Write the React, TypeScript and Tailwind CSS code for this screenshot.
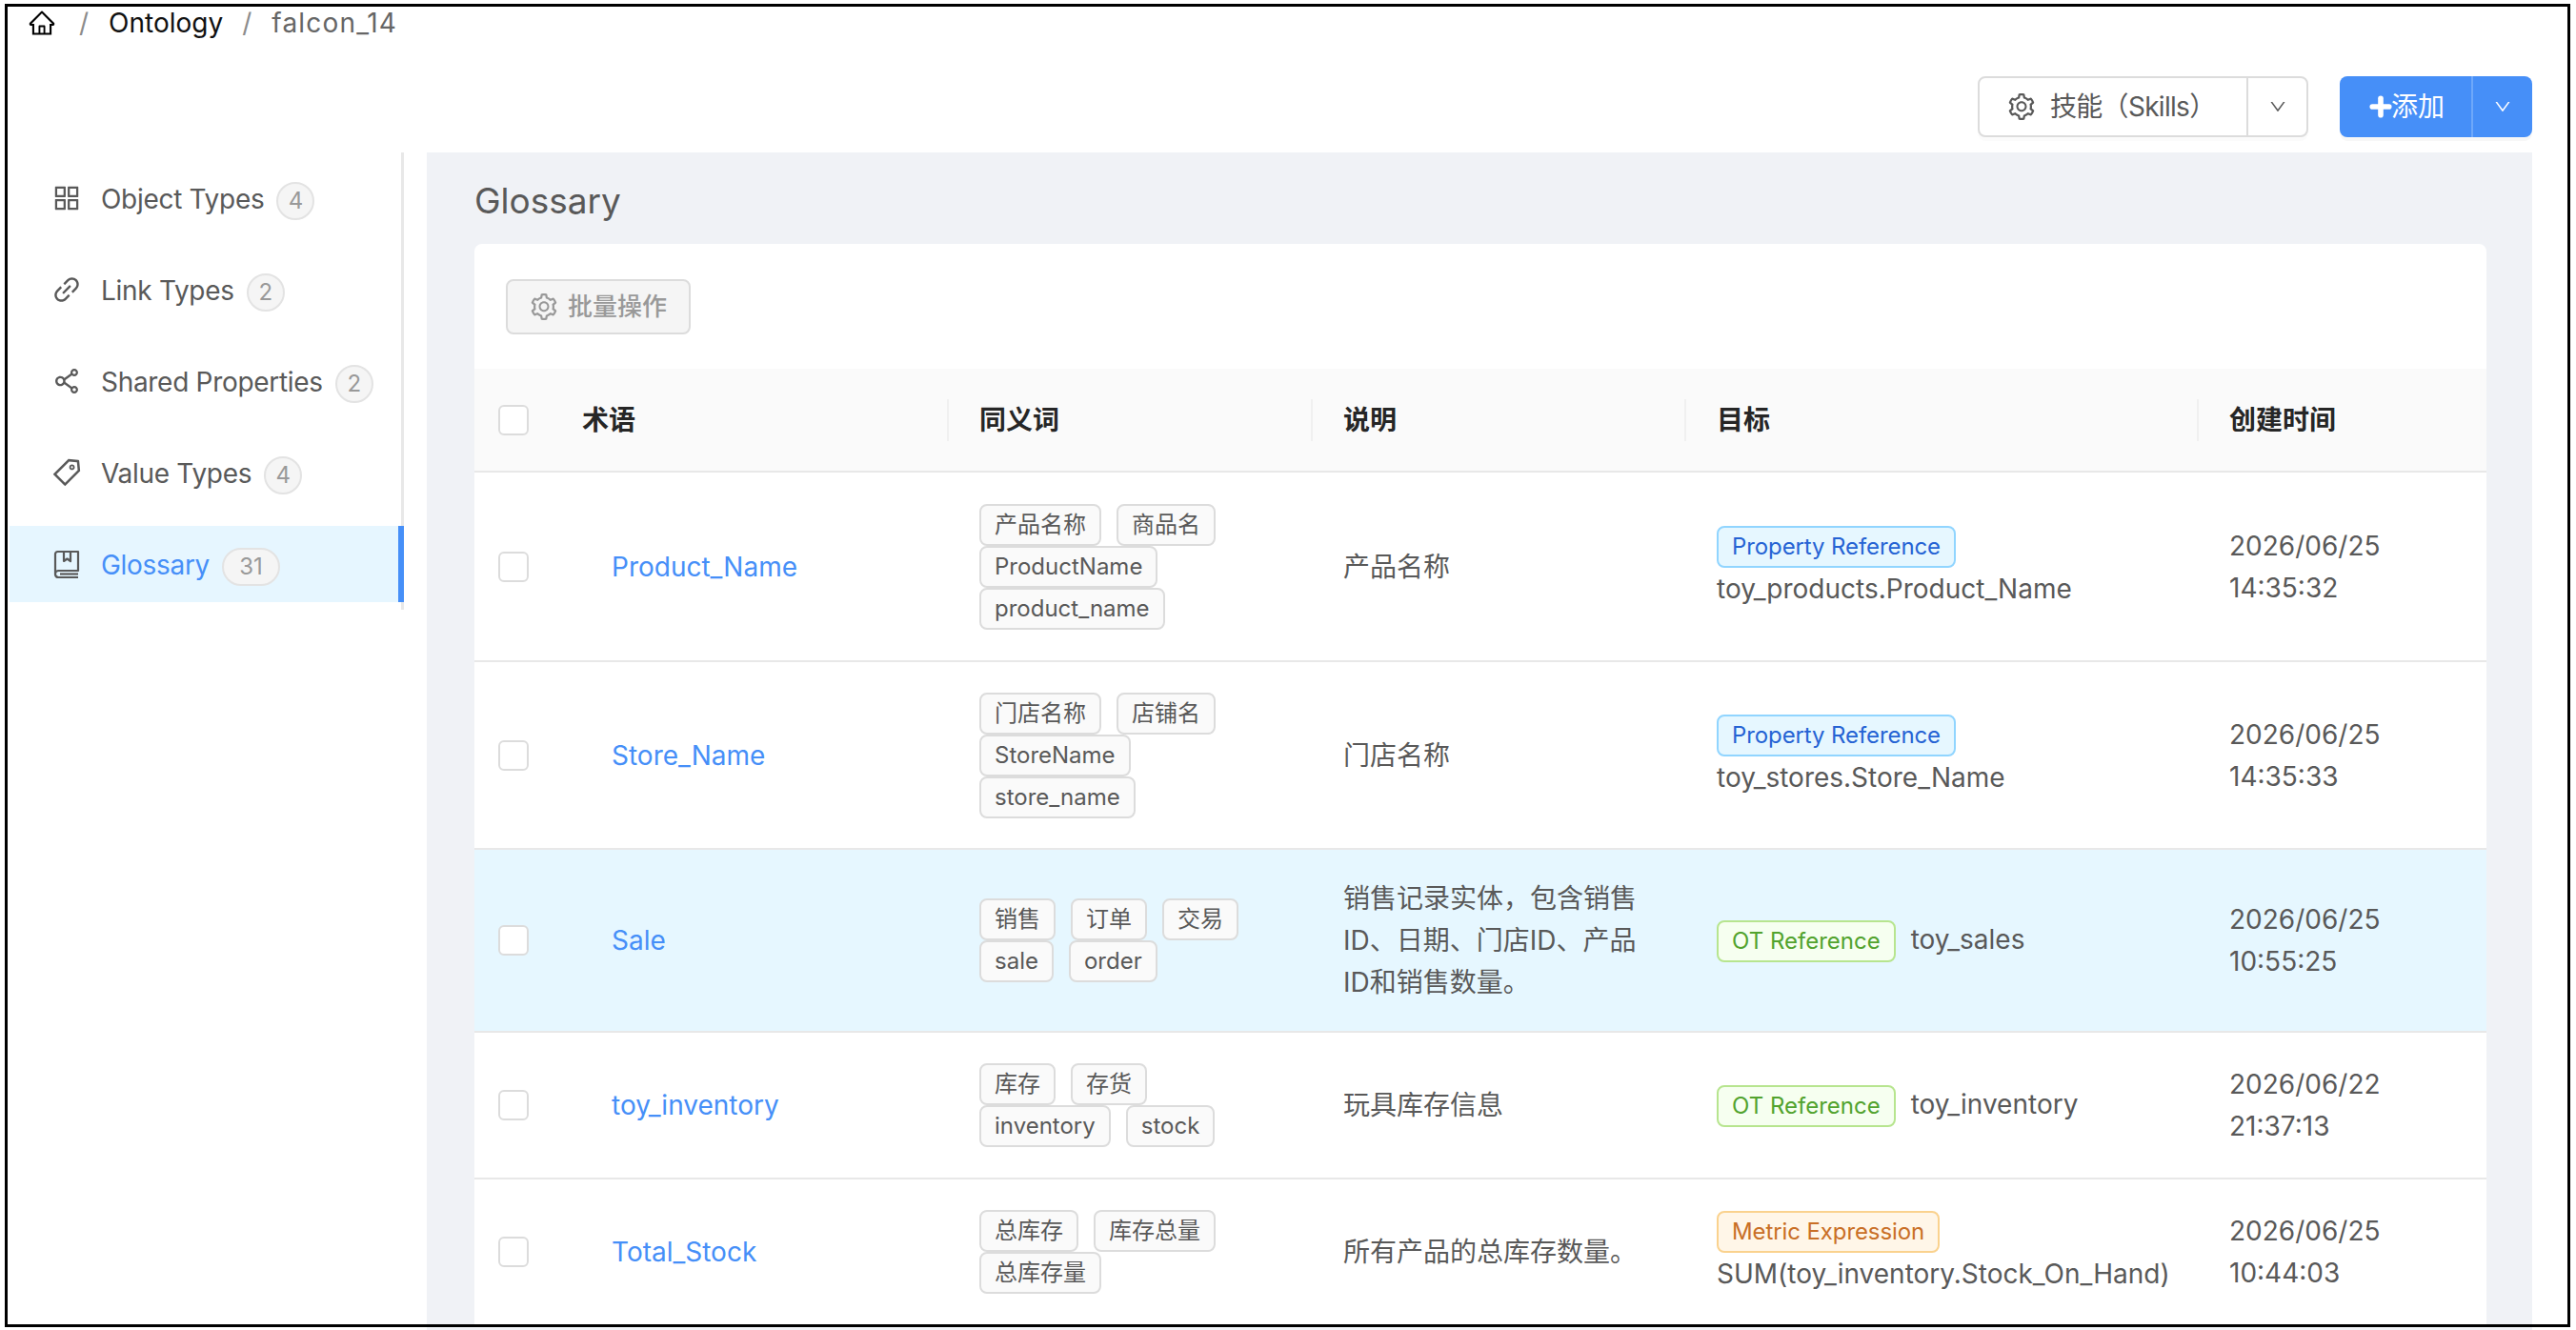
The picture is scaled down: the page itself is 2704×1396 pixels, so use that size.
import React from "react";
import {
  AiOutlineAppstore,
  AiOutlineLink,
  AiOutlineShareAlt,
  AiOutlineTag,
  AiOutlineHome,
  AiOutlineSetting,
  AiOutlineDown,
} from "react-icons/ai";
import { Plus } from "lucide-react";

const font = "font-['Inter','Noto_Sans_CJK_SC',sans-serif]";

function Tag({ children }: { children: React.ReactNode }) {
  return (
    <span className="mr-4 inline-flex h-11 items-center whitespace-nowrap rounded-lg border-2 border-[#dcdcdc] bg-[#fafafa] px-3.5 text-2xl text-[#595959]">
      {children}
    </span>
  );
}

function TypeTag({ kind, children }: { kind: "prop" | "ot" | "metric"; children: React.ReactNode }) {
  const tone =
    kind === "prop"
      ? "border-[#91d5ff] bg-[#e6f7ff] text-[#2563d4] tracking-[-0.1px]"
      : kind === "ot"
        ? "border-[#b7e58f] bg-[#f6fff0] text-[#52a32e]"
        : "border-[#fad28e] bg-[#fff6e8] text-[#c96f26] tracking-[-0.1px]";
  return (
    <span className={`mr-4 inline-flex h-11 items-center whitespace-nowrap rounded-lg border-2 px-3.5 align-middle text-2xl ${tone}`}>
      {children}
    </span>
  );
}

type Row = {
  term: string;
  tags: string[];
  desc: string;
  kind: "prop" | "ot" | "metric";
  label: string;
  target: string;
  block: boolean;
  time: string;
  height: string;
  active?: boolean;
};

const rows: Row[] = [
  {
    term: "Product_Name",
    tags: ["产品名称", "商品名", "ProductName", "product_name"],
    desc: "产品名称",
    kind: "prop",
    label: "Property Reference",
    target: "toy_products.Product_Name",
    block: true,
    time: "2026/06/25 14:35:32",
    height: "h-[199px]",
  },
  {
    term: "Store_Name",
    tags: ["门店名称", "店铺名", "StoreName", "store_name"],
    desc: "门店名称",
    kind: "prop",
    label: "Property Reference",
    target: "toy_stores.Store_Name",
    block: true,
    time: "2026/06/25 14:35:33",
    height: "h-[197px]",
  },
  {
    term: "Sale",
    tags: ["销售", "订单", "交易", "sale", "order"],
    desc: "销售记录实体，包含销售ID、日期、门店ID、产品ID和销售数量。",
    kind: "ot",
    label: "OT Reference",
    target: "toy_sales",
    block: false,
    time: "2026/06/25 10:55:25",
    height: "h-[192px]",
    active: true,
  },
  {
    term: "toy_inventory",
    tags: ["库存", "存货", "inventory", "stock"],
    desc: "玩具库存信息",
    kind: "ot",
    label: "OT Reference",
    target: "toy_inventory",
    block: false,
    time: "2026/06/22 21:37:13",
    height: "h-[154px]",
  },
  {
    term: "Total_Stock",
    tags: ["总库存", "库存总量", "总库存量"],
    desc: "所有产品的总库存数量。",
    kind: "metric",
    label: "Metric Expression",
    target: "SUM(toy_inventory.Stock_On_Hand)",
    block: true,
    time: "2026/06/25 10:44:03",
    height: "h-[154px]",
  },
];

function BookIcon() {
  return (
    <svg width="34" height="34" viewBox="0 0 34 34" fill="none" stroke="currentColor" strokeWidth="2.2" strokeLinejoin="round">
      <path d="M5 28V6.5A2.5 2.5 0 0 1 7.5 4H29v20H8.5A3.5 3.5 0 0 0 5 27.5v.5A3.5 3.5 0 0 0 8.5 31H29" />
      <path d="M14 4v10l3.5-2.5L21 14V4" />
      <path d="M10 27.5h19" />
    </svg>
  );
}

const nav = [
  { label: "Object Types", count: "4", icon: <AiOutlineAppstore size={34} /> },
  { label: "Link Types", count: "2", icon: <AiOutlineLink size={34} /> },
  { label: "Shared Properties", count: "2", icon: <AiOutlineShareAlt size={34} /> },
  { label: "Value Types", count: "4", icon: <AiOutlineTag size={34} /> },
  { label: "Glossary", count: "31", icon: <BookIcon />, active: true },
];

function Check() {
  return <span className="block h-8 w-8 rounded-md border-2 border-[#dcdcdc] bg-white" />;
}

const thDivider =
  "relative after:absolute after:right-0 after:top-1/2 after:h-11 after:w-[2px] after:-translate-y-1/2 after:bg-[#f0f0f0]";

export default function App() {
  return (
    <div className={`relative h-[1396px] w-[2704px] overflow-hidden bg-white text-[28px] leading-[44px] text-[#595959] ${font}`}>
      {/* breadcrumb */}
      <div className="flex h-[40px] items-center pl-[29px] pt-[8px] text-[28px]">
        <AiOutlineHome size={30} className="text-black" />
        <span className="ml-[24px] text-[#8c8c8c]">/</span>
        <span className="ml-[21px] text-[#111]">Ontology</span>
        <span className="ml-[20px] text-[#8c8c8c]">/</span>
        <span className="ml-[21px] tracking-[1.2px] text-[#666]">falcon_14</span>
      </div>

      {/* actions */}
      <div className="mr-[46px] mt-[40px] flex h-[80px] justify-end gap-[33px]">
        <div className="flex h-[64px] w-[347px] rounded-lg border-2 border-[#dcdcdc] bg-white text-[#595959] shadow-[0_4px_0_rgba(0,0,0,0.015)]">
          <div className="flex flex-1 items-center border-r-2 border-[#dcdcdc] pl-[28px]">
            <AiOutlineSetting size={32} />
            <span className="ml-[14px] whitespace-nowrap tracking-[-0.7px]">技能（Skills）</span>
          </div>
          <div className="flex w-[61px] items-center justify-center">
            <AiOutlineDown size={20} />
          </div>
        </div>
        <div className="flex h-[64px] w-[202px] rounded-lg bg-[#468ff8] text-white shadow-[0_4px_0_rgba(0,0,0,0.03)]">
          <div className="flex flex-1 items-center justify-center border-r-2 border-[#6ea8fa]">
            <Plus size={30} strokeWidth={4.5} className="-mr-1" />
            <span className="whitespace-nowrap">添加</span>
          </div>
          <div className="flex w-[62px] items-center justify-center">
            <AiOutlineDown size={20} />
          </div>
        </div>
      </div>

      {/* body */}
      <div className="flex items-start pl-[10px]">
        <aside className="h-[480px] w-[414px] shrink-0 border-r-[3px] border-[#e8e8e8] pt-[8px]">
          {nav.map((n) => (
            <div
              key={n.label}
              className={`relative mb-4 mr-[-3px] flex h-20 items-center pl-[43px] ${
                n.active ? "border-r-[6px] border-[#468ff8] bg-[#e6f6ff]" : ""
              }`}
            >
              <span className="flex w-[53px] shrink-0 text-[#595959]">{n.icon}</span>
              <span className={`mt-[1px] whitespace-nowrap text-[28px] tracking-[-0.3px] ${n.active ? "text-[#468ff8]" : "text-[#595959]"}`}>{n.label}</span>
              <span
                className={`ml-[13px] mt-[6px] flex h-10 items-center justify-center rounded-full border-2 border-[#e3e3e3] bg-[#f5f5f5] text-2xl text-[#999] ${
                  n.count.length > 1 ? "w-[61px]" : "w-10"
                }`}
              >
                {n.count}
              </span>
            </div>
          ))}
        </aside>

        <main className="ml-6 h-[1240px] w-[2210px] bg-[#f0f2f6] pl-[50px] pr-[48px]">
          <h1 className="flex h-[96px] items-center pt-[6px] text-[37px] font-normal text-[#595959]">Glossary</h1>
          <section className="rounded-lg bg-white">
            <div className="flex h-[131px] items-center pl-[33px]">
              <button className="flex h-[58px] w-[194px] items-center gap-[9px] rounded-lg border-2 border-[#dcdcdc] bg-[#f5f5f5] pl-[22px] text-[26px] font-medium text-[#999]">
                <AiOutlineSetting size={32} />
                <span className="whitespace-nowrap">批量操作</span>
              </button>
            </div>
            <table className="w-full table-fixed">
              <colgroup>
                <col className="w-[81px]" />
                <col className="w-[417px]" />
                <col className="w-[382px]" />
                <col className="w-[392px]" />
                <col className="w-[538px]" />
                <col className="w-[302px]" />
              </colgroup>
              <thead>
                <tr className="h-[108px] bg-[#fafafa] text-left text-[28px] text-[#262626]">
                  <th className="border-b-2 border-[#e8e8e8] pl-[25px] font-semibold">
                    <Check />
                  </th>
                  <th className={`border-b-2 border-[#e8e8e8] px-8 font-semibold ${thDivider}`}>术语</th>
                  <th className={`border-b-2 border-[#e8e8e8] px-8 font-semibold ${thDivider}`}>同义词</th>
                  <th className={`border-b-2 border-[#e8e8e8] px-8 font-semibold ${thDivider}`}>说明</th>
                  <th className={`border-b-2 border-[#e8e8e8] px-8 font-semibold ${thDivider}`}>目标</th>
                  <th className="border-b-2 border-[#e8e8e8] px-8 font-semibold">创建时间</th>
                </tr>
              </thead>
              <tbody>
                {rows.map((r) => (
                  <tr key={r.term} className={`${r.height} ${r.active ? "bg-[#e6f7ff]" : "bg-white"}`}>
                    <td className="border-b-2 border-[#e8e8e8] pl-[25px]">
                      <Check />
                    </td>
                    <td className="border-b-2 border-[#e8e8e8] pl-[63px] pr-8 text-[#468ff8]">{r.term}</td>
                    <td className="border-b-2 border-[#e8e8e8] px-8">
                      <div className="flex flex-wrap">
                        {r.tags.map((t) => (
                          <Tag key={t}>{t}</Tag>
                        ))}
                      </div>
                    </td>
                    <td className="border-b-2 border-[#e8e8e8] px-8">{r.desc}</td>
                    <td className="border-b-2 border-[#e8e8e8] px-8">
                      <TypeTag kind={r.kind}>{r.label}</TypeTag>
                      {r.block ? <br /> : null}
                      {r.target}
                    </td>
                    <td className="border-b-2 border-[#e8e8e8] px-8">{r.time}</td>
                  </tr>
                ))}
              </tbody>
            </table>
          </section>
        </main>
      </div>

      {/* screenshot frame drawn over the page */}
      <div className="pointer-events-none absolute bottom-[3px] left-[5px] right-[6px] top-[4px] border-[3px] border-black" />
    </div>
  );
}
